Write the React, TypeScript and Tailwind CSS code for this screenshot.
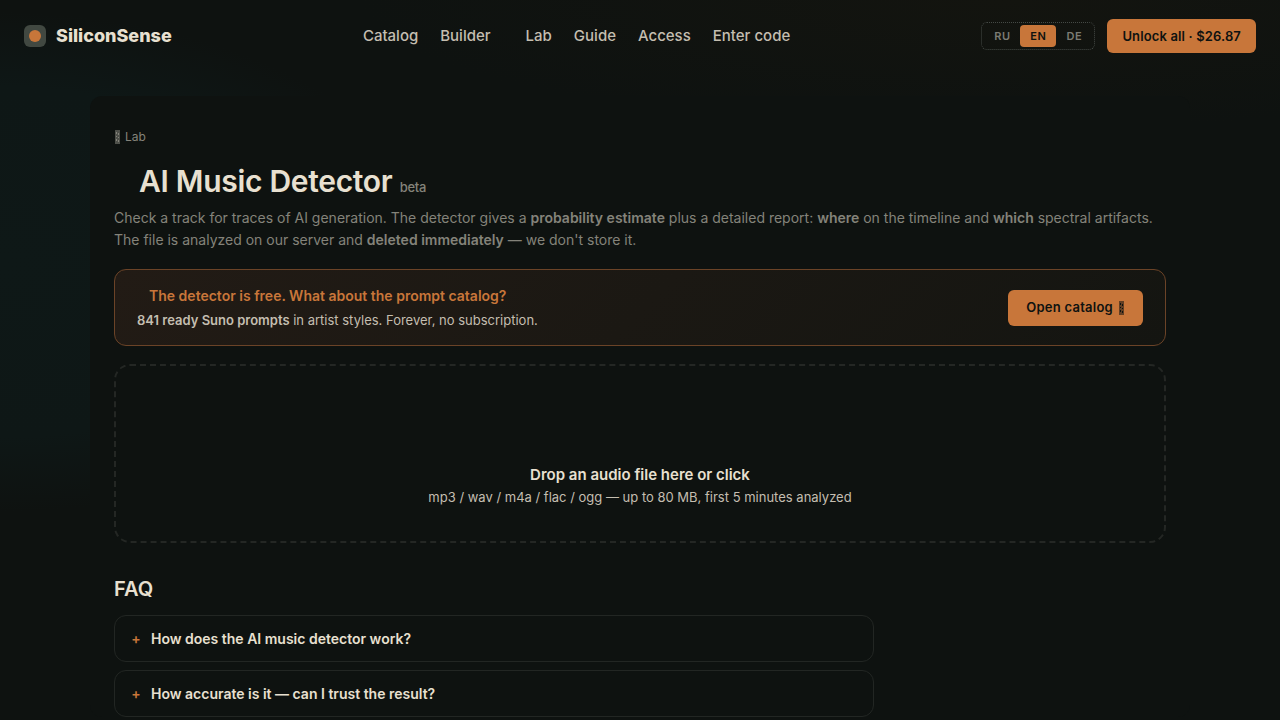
import { useState } from 'react'

const navGroups = [
  ['Catalog', 'Builder'],
  ['Lab', 'Guide', 'Access', 'Enter code'],
]

const languages = ['RU', 'EN', 'DE']

const questions = [
  {
    q: 'How does the AI music detector work?',
    a: 'It looks for spectral artifacts that generators leave behind.',
  },
  {
    q: 'How accurate is it — can I trust the result?',
    a: 'The result is a probability estimate, not a verdict.',
  },
]

export default function App() {
  return (
    <div className="min-h-screen bg-[#0e1210] bg-[radial-gradient(ellipse_440px_250px_at_0px_262px,#0e1817_0%,#0e1716_70%,transparent_100%),radial-gradient(ellipse_640px_130px_at_1000px_0px,#13140f_0%,transparent_100%)] font-['Inter','Liberation_Sans',sans-serif] text-[#e8e0d0]">
      <Header />
      <main className="mx-auto mt-6 max-w-[1100px] rounded-xl bg-[#0e1210] px-6 pt-8">
        <Intro />
        <Promo />
        <DropZone />
        <Faq />
      </main>
    </div>
  )
}

function Header() {
  const [lang, setLang] = useState('EN')

  return (
    <header className="flex h-[72px] items-center justify-between px-6">
      <a href="#" className="flex items-center gap-2.5">
        <span className="flex size-[22px] items-center justify-center rounded-md bg-[#414841]">
          <span className="size-3 rounded-full bg-[#c8763a]" />
        </span>
        <span className="text-lg font-extrabold">SiliconSense</span>
      </a>

      <nav className="flex gap-[35px] text-[15px] font-medium text-[#c4beb0]">
        {navGroups.map((group) => (
          <div key={group[0]} className="flex gap-[22px]">
            {group.map((item) => (
              <a key={item} href="#">
                {item}
              </a>
            ))}
          </div>
        ))}
      </nav>

      <div className="flex items-center gap-3">
        <div className="flex rounded-md border border-dotted border-[#454a46] p-0.5">
          {languages.map((l) => (
            <button
              key={l}
              onClick={() => setLang(l)}
              className={`h-[22px] w-9 rounded-sm text-[11px] font-semibold tracking-wider ${
                l === lang ? 'bg-[#c8763a] text-[#0e1210]' : 'text-[#7c7c74]'
              }`}
            >
              {l}
            </button>
          ))}
        </div>
        <button className="h-[34px] rounded-md bg-[#c8763a] px-[15px] pt-0.5 text-[13px] font-semibold tracking-[0.01em] text-[#0e1210]">
          Unlock all · $26.87
        </button>
      </div>
    </header>
  )
}

// narrow arrow placeholder box
function ArrowBox() {
  return (
    <svg viewBox="0 0 6 14" className="h-3.5 w-1.5" aria-hidden="true">
      <rect width="5" height="14" fill="currentColor" fillOpacity="0.55" />
      <path
        d="M1 2h1v2h-1zM3 3h1v2h-1zM1 6h1v1h-1zM3 7h1v1h-1zM1 9h1v2h-1zM3 10h1v2h-1z"
        fill="currentColor"
      />
    </svg>
  )
}

function Intro() {
  return (
    <section>
      <a href="#" className="flex items-center gap-1 pl-px text-xs leading-[18px] text-[#84837a]">
        <ArrowBox />
        Lab
      </a>
      <h1 className="mt-[17px] pl-[25px] text-3xl leading-9 font-semibold tracking-[-0.01em]">
        AI Music Detector{' '}
        <span className="text-[13px] leading-none font-medium text-[#84837a]">beta</span>
      </h1>
      <p className="mt-2 text-sm leading-[22px] text-[#84837a]">
        Check a track for traces of AI generation. The detector gives a{' '}
        <b className="font-semibold">probability estimate</b> plus a detailed report:{' '}
        <b className="font-semibold">where</b> on the timeline and{' '}
        <b className="font-semibold">which</b> spectral artifacts. The file is analyzed on our
        server and <b className="font-semibold">deleted immediately</b> — we don't store it.
      </p>
    </section>
  )
}

function Promo() {
  return (
    <section className="mt-[18px] flex h-[77px] items-center justify-between rounded-xl border border-[#6b4327] bg-linear-135 from-[#221b15] to-[#141511] px-[22px]">
      <div>
        <h2 className="pl-3 text-sm leading-6 font-semibold text-[#c8763a]">
          The detector is free. What about the prompt catalog?
        </h2>
        <p className="text-[13px] leading-6 text-[#c4beb0]">
          <b className="font-semibold">841 ready Suno prompts</b> in artist styles. Forever, no
          subscription.
        </p>
      </div>
      <button className="flex h-9 items-center gap-1.5 rounded-md bg-[#c8763a] px-[18px] text-[13px] font-semibold tracking-[0.02em] text-[#0e1210]">
        Open catalog
        <ArrowBox />
      </button>
    </section>
  )
}

function DropZone() {
  return (
    <label className="mt-[18px] flex h-[179px] cursor-pointer flex-col items-center justify-end rounded-2xl border-2 border-dashed border-[#242724] pb-[34px]">
      <input type="file" accept="audio/*" className="sr-only" />
      <span className="text-[15px] leading-6 font-semibold">Drop an audio file here or click</span>
      <span className="text-[13px] leading-5 text-[#c4beb0]">
        mp3 / wav / m4a / flac / ogg — up to 80 MB, first 5 minutes analyzed
      </span>
    </label>
  )
}

function Faq() {
  const [open, setOpen] = useState<string | null>(null)

  return (
    <section className="mt-8 max-w-[760px]">
      <h2 className="text-xl leading-7 font-semibold">FAQ</h2>
      <div className="mt-3 flex flex-col gap-2">
        {questions.map(({ q, a }) => (
          <div key={q} className="rounded-xl border border-[#222623] px-4">
            <button
              aria-expanded={open === q}
              onClick={() => setOpen(open === q ? null : q)}
              className="flex h-[45px] w-full items-center gap-2.5 text-left text-sm font-semibold"
            >
              <span className="w-2.5 text-center text-[#c8763a]">+</span>
              {q}
            </button>
            {open === q && <p className="pb-4 text-sm text-[#84837a]">{a}</p>}
          </div>
        ))}
      </div>
    </section>
  )
}
